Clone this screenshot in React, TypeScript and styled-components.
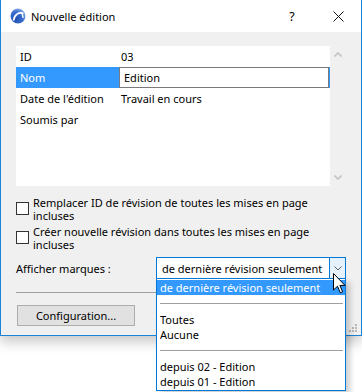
import React from "react";
import styled, { createGlobalStyle } from "styled-components";

const FONT = `"Noto Sans", "Open Sans", sans-serif`;

const Global = createGlobalStyle`
  html, body { margin: 0; padding: 0; background: #ffffff; }
  body { width: 362px; height: 392px; overflow: hidden; font-family: ${FONT}; font-size: 11px; color: #000; }
  * { box-sizing: border-box; }
`;

const Stage = styled.div`
  position: relative;
  width: 362px;
  height: 392px;
`;

const Window = styled.div`
  width: 362px;
  height: 336px;
  display: flex;
  flex-direction: column;
  border: 1px solid #1883d7;
  border-top: none;
  background: #f0f0f0;
  box-shadow: 0 6px 12px rgba(0, 0, 0, 0.22);
  position: relative;
`;

const TitleBar = styled.div`
  height: 32px;
  background: #ffffff;
  display: flex;
  align-items: center;
  padding-left: 9px;
  flex-shrink: 0;
`;

const TitleText = styled.span`
  margin-left: 5px;
  font-size: 11px;
  color: #000;
  flex: 1;
`;

const TitleButton = styled.div<{ $w: number }>`
  width: ${(p) => p.$w}px;
  height: 32px;
  display: flex;
  align-items: center;
  justify-content: center;
  font-size: 12.5px;
`;

const Body = styled.div`
  flex: 1;
  display: flex;
  flex-direction: column;
  padding: 14px 15px 0 15px;
`;

const ListArea = styled.div`
  display: flex;
  height: 140px;
`;

const ListBox = styled.div`
  width: 314px;
  background: #ffffff;
  display: flex;
  flex-direction: column;
`;

const Row = styled.div<{ $selected?: boolean }>`
  height: 21px;
  display: flex;
  align-items: center;
  background: ${(p) => (p.$selected ? "#3399ff" : "transparent")};
  color: ${(p) => (p.$selected ? "#ffffff" : "#000")};
`;

const RowLabel = styled.div`
  width: 101px;
  padding-left: 4px;
  flex-shrink: 0;
`;

const RowValue = styled.div`
  padding-left: 4px;
  color: #000;
`;

const RowInput = styled.div`
  width: 210px;
  height: 21px;
  margin-left: 2px;
  border: 1px solid #7a7a7a;
  background: #fff;
  color: #000;
  display: flex;
  align-items: center;
  padding-left: 4px;
`;

const ScrollBar = styled.div`
  width: 16px;
  display: flex;
  flex-direction: column;
  justify-content: space-between;
  align-items: center;
  padding: 6px 0 6px 0;
`;

const CheckRow = styled.div<{ $top: number }>`
  display: flex;
  align-items: flex-start;
  margin-top: ${(p) => p.$top}px;
`;

const Box = styled.div`
  width: 13px;
  height: 13px;
  border: 1px solid #333333;
  background: #fff;
  margin-top: 6px;
  flex-shrink: 0;
`;

const CheckText = styled.div`
  margin-left: 4px;
  line-height: 13px;
  width: 290px;
`;

const ComboRow = styled.div`
  display: flex;
  align-items: center;
  margin-top: 6px;
  height: 23px;
`;

const ComboLabel = styled.div`
  width: 140px;
  flex-shrink: 0;
`;

const Combo = styled.div`
  width: 190px;
  height: 23px;
  border: 1px solid #0078d7;
  background: #fff;
  display: flex;
  align-items: stretch;
`;

const ComboText = styled.div`
  flex: 1;
  display: flex;
  align-items: center;
  padding-left: 5px;
  white-space: nowrap;
`;

const ComboButton = styled.div`
  width: 16px;
  background: #e5f1fb;
  border-left: 1px solid #0078d7;
  display: flex;
  align-items: center;
  justify-content: center;
`;

const Separator = styled.div`
  height: 1px;
  background: #a0a0a0;
  margin-top: 12px;
`;

const Button = styled.div`
  margin-top: 12px;
  margin-left: 1px;
  width: 118px;
  height: 21px;
  border: 1px solid #adadad;
  background: #e1e1e1;
  display: flex;
  align-items: center;
  justify-content: center;
`;

const Grip = styled.svg`
  position: absolute;
  right: 3px;
  bottom: 2px;
`;

const Dropdown = styled.div`
  position: absolute;
  left: 156px;
  top: 278px;
  width: 190px;
  border: 1px solid #0078d7;
  background: #fff;
  box-shadow: 4px 4px 6px rgba(0, 0, 0, 0.2);
  display: flex;
  flex-direction: column;
  padding-top: 1px;
  padding-bottom: 1px;
`;

const Item = styled.div<{ $selected?: boolean }>`
  height: 15px;
  display: flex;
  align-items: center;
  padding-left: 3px;
  white-space: nowrap;
  background: ${(p) => (p.$selected ? "#3399ff" : "transparent")};
  color: ${(p) => (p.$selected ? "#fff" : "#000")};
`;

const ItemSep = styled.div`
  height: 17px;
  display: flex;
  align-items: center;
  padding: 0 2px 0 3px;
  &::after {
    content: "";
    flex: 1;
    height: 1px;
    background: #a0a0a0;
  }
`;

const Cursor = styled.svg`
  position: absolute;
  left: 333px;
  top: 273px;
`;

const Logo = () => (
  <svg width="16" height="16" viewBox="0 0 16 16">
    <defs>
      <radialGradient id="lg" cx="0.35" cy="0.7" r="0.8">
        <stop offset="0" stopColor="#1e4fae" />
        <stop offset="0.6" stopColor="#3b6fd0" />
        <stop offset="1" stopColor="#9dbbf0" />
      </radialGradient>
    </defs>
    <circle cx="8" cy="8" r="7.5" fill="url(#lg)" />
    <path d="M3.5 12.5 C4.5 6.5 9 3.5 13.5 5.5" stroke="#fff" strokeWidth="1.6" fill="none" />
    <path d="M12 5 L13.2 9.8" stroke="#fff" strokeWidth="1.4" fill="none" />
  </svg>
);

const Chevron = ({ up }: { up?: boolean }) => (
  <svg width="8" height="5" viewBox="0 0 8 5">
    <path d={up ? "M0.5 4.5 L4 1 L7.5 4.5" : "M0.5 0.5 L4 4 L7.5 0.5"} stroke="#c2c2c2" strokeWidth="1.6" fill="none" />
  </svg>
);

export default function App() {
  return (
    <Stage>
      <Global />
      <Window>
        <TitleBar>
          <Logo />
          <TitleText>Nouvelle édition</TitleText>
          <TitleButton $w={46}>?</TitleButton>
          <TitleButton $w={46}>
            <svg width="11" height="11" viewBox="0 0 11 11">
              <path d="M0.5 0.5 L10.5 10.5 M10.5 0.5 L0.5 10.5" stroke="#111" strokeWidth="1" />
            </svg>
          </TitleButton>
        </TitleBar>
        <Body>
          <ListArea>
            <ListBox>
              <Row>
                <RowLabel>ID</RowLabel>
                <RowValue>03</RowValue>
              </Row>
              <Row $selected>
                <RowLabel>Nom</RowLabel>
                <RowInput>Edition</RowInput>
              </Row>
              <Row>
                <RowLabel>Date de l'édition</RowLabel>
                <RowValue>Travail en cours</RowValue>
              </Row>
              <Row>
                <RowLabel>Soumis par</RowLabel>
              </Row>
            </ListBox>
            <ScrollBar>
              <Chevron up />
              <Chevron />
            </ScrollBar>
          </ListArea>
          <CheckRow $top={10}>
            <Box />
            <CheckText>Remplacer ID de révision de toutes les mises en page incluses</CheckText>
          </CheckRow>
          <CheckRow $top={3}>
            <Box />
            <CheckText>Créer nouvelle révision dans toutes les mises en page incluses</CheckText>
          </CheckRow>
          <ComboRow>
            <ComboLabel>Afficher marques :</ComboLabel>
            <Combo>
              <ComboText>de dernière révision seulement</ComboText>
              <ComboButton>
                <svg width="8" height="5" viewBox="0 0 8 5">
                  <path d="M0.5 0.5 L4 4 L7.5 0.5" stroke="#606060" strokeWidth="1" fill="none" />
                </svg>
              </ComboButton>
            </Combo>
          </ComboRow>
          <Separator />
          <Button>Configuration...</Button>
        </Body>
        <Grip width="9" height="9" viewBox="0 0 9 9">
          <g fill="#b8b8b8">
            <rect x="6" y="0" width="2" height="2" />
            <rect x="3" y="3" width="2" height="2" />
            <rect x="6" y="3" width="2" height="2" />
            <rect x="0" y="6" width="2" height="2" />
            <rect x="3" y="6" width="2" height="2" />
            <rect x="6" y="6" width="2" height="2" />
          </g>
        </Grip>
      </Window>
      <Dropdown>
        <Item $selected>de dernière révision seulement</Item>
        <ItemSep />
        <Item>Toutes</Item>
        <Item>Aucune</Item>
        <ItemSep />
        <Item>depuis 02 - Edition</Item>
        <Item>depuis 01 - Edition</Item>
      </Dropdown>
      <Cursor width="13" height="21" viewBox="0 0 13 21">
        <path d="M0.5 0.5 L0.5 17 L4.5 13.2 L7.3 19.8 L9.6 18.8 L6.9 12.4 L12 12.4 Z" fill="#fff" stroke="#000" strokeWidth="1" strokeLinejoin="miter" />
      </Cursor>
    </Stage>
  );
}
